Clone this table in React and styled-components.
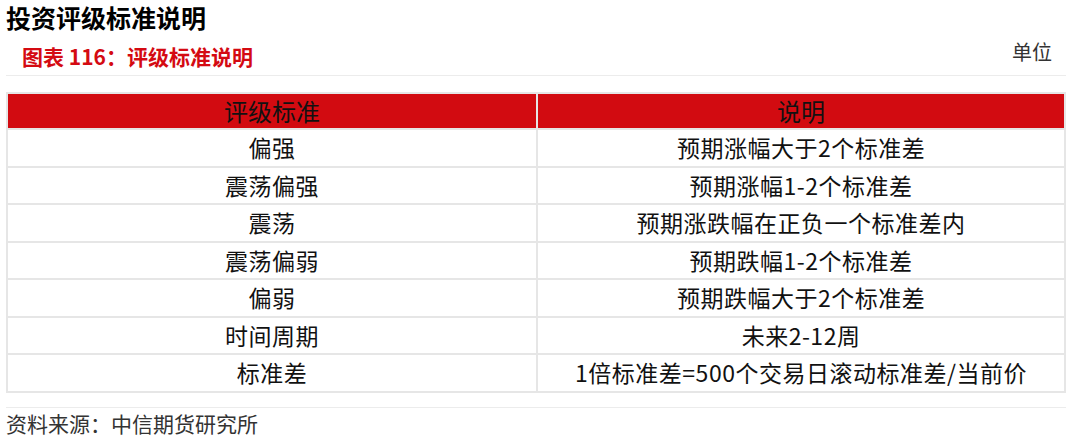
import React from "react";
import styled, { createGlobalStyle } from "styled-components";

const Global = createGlobalStyle`
  html, body { margin: 0; padding: 0; background: #fff; }
  body { font-family: "Noto Sans CJK SC", "Noto Sans", sans-serif; color: #111; }
`;

const Page = styled.div`
  width: 1073px;
  height: 438px;
  box-sizing: border-box;
  padding: 0 7px 0 6px;
  display: flex;
  flex-direction: column;
`;

const Title = styled.h1`
  margin: 0;
  height: 36px;
  font-size: 25px;
  line-height: 34px;
  font-weight: 700;
  color: #000;
`;

const CaptionBar = styled.div`
  display: flex;
  justify-content: space-between;
  align-items: flex-end;
  height: 40px;
  box-sizing: border-box;
  border-bottom: 1px solid #ececec;
  padding: 0 14px 5px 16px;
`;

const Caption = styled.div`
  font-size: 21px;
  line-height: 28px;
  font-weight: 700;
  color: #d40a12;
`;

const Unit = styled.div`
  font-size: 20px;
  line-height: 28px;
  color: #333;
  margin-bottom: 4px;
`;

const Table = styled.table`
  margin-top: 16px;
  width: 100%;
  border-collapse: collapse;
  border: 2px solid #e6e6e6;
  table-layout: fixed;
`;

const HeadCell = styled.th`
  background: #d20b11;
  height: 34px;
  padding: 0;
  font-size: 24px;
  font-weight: 400;
  color: #111;
  text-align: center;
  border: 2px solid #e6e6e6;
  border-top: none;
  line-height: 34px;
`;

const Cell = styled.td`
  height: 35.5px;
  padding: 0;
  font-size: 23px;
  letter-spacing: 0.5px;
  line-height: 35px;
  color: #111;
  text-align: center;
  border: 2px solid #e6e6e6;
`;

const Footer = styled.div`
  margin-top: 14px;
  border-top: 1px solid #ececec;
  padding-top: 1px;
  font-size: 21px;
  line-height: 28px;
  color: #333;
`;

const rows = [
  ["偏强", "预期涨幅大于2个标准差"],
  ["震荡偏强", "预期涨幅1-2个标准差"],
  ["震荡", "预期涨跌幅在正负一个标准差内"],
  ["震荡偏弱", "预期跌幅1-2个标准差"],
  ["偏弱", "预期跌幅大于2个标准差"],
  ["时间周期", "未来2-12周"],
  ["标准差", "1倍标准差=500个交易日滚动标准差/当前价"],
];

export default function App() {
  return (
    <Page>
      <Global />
      <Title>投资评级标准说明</Title>
      <CaptionBar>
        <Caption>图表 116：评级标准说明</Caption>
        <Unit>单位</Unit>
      </CaptionBar>
      <Table>
        <colgroup>
          <col style={{ width: "50.1%" }} />
          <col />
        </colgroup>
        <thead>
          <tr>
            <HeadCell>评级标准</HeadCell>
            <HeadCell>说明</HeadCell>
          </tr>
        </thead>
        <tbody>
          {rows.map(([a, b]) => (
            <tr key={a}>
              <Cell>{a}</Cell>
              <Cell>{b}</Cell>
            </tr>
          ))}
        </tbody>
      </Table>
      <Footer>资料来源：中信期货研究所</Footer>
    </Page>
  );
}
